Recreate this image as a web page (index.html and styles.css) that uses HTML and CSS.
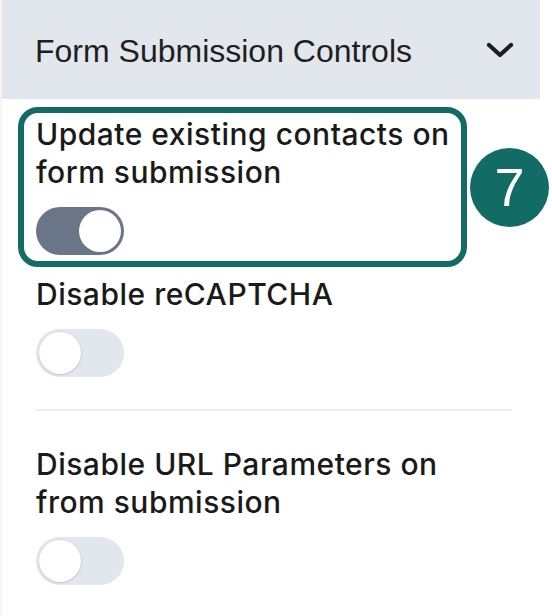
FILE: index.html
```html
<!DOCTYPE html>
<html>
<head>
<meta charset="utf-8">
<link rel="stylesheet" href="styles.css">
</head>
<body>
<div class="panel">
  <div class="panel-header">
    <span class="panel-title">Form Submission Controls</span>
    <svg class="chevron" width="28" height="16" viewBox="0 0 28 16"><polyline points="3,3 14,13 25,3" fill="none" stroke="#1f1f1f" stroke-width="4.2" stroke-linecap="round" stroke-linejoin="round"/></svg>
  </div>
  <div class="panel-body">
    <div class="setting setting-first">
      <div class="label">Update existing contacts on form submission</div>
      <div class="toggle on"><span class="knob"></span></div>
      <div class="highlight"></div>
      <div class="badge">7</div>
    </div>
    <div class="setting setting-second">
      <div class="label">Disable reCAPTCHA</div>
      <div class="toggle"><span class="knob"></span></div>
    </div>
    <div class="divider"></div>
    <div class="setting setting-third">
      <div class="label">Disable URL Parameters on<br>from submission</div>
      <div class="toggle"><span class="knob"></span></div>
    </div>
  </div>
</div>
</body>
</html>
```

FILE: styles.css
```css
html, body {
  margin: 0;
  padding: 0;
  background: #ffffff;
}

.panel {
  width: 538px;
  min-height: 616px;
  border-left: 2px solid #f3f5f8;
  box-sizing: content-box;
}

.panel-header {
  height: 99px;
  background: #e2e6ed;
  display: flex;
  align-items: center;
  justify-content: space-between;
  padding: 0 26px 0 33px;
}

.panel-title {
  font-family: "Liberation Sans", Arial, sans-serif;
  font-size: 32px;
  color: #1f1f1f;
  line-height: 1;
  padding-top: 2px;
}

.chevron {
  display: block;
}

.panel-body {
  padding: 0 28px 0 34px;
}

.setting {
  position: relative;
  display: flex;
  flex-direction: column;
  align-items: flex-start;
}

.setting-first {
  padding-top: 16px;
  max-width: 430px;
}

.setting-second {
  padding-top: 20px;
}

.setting-third {
  padding-top: 34px;
}

.label {
  font-family: Inter, "Noto Sans", sans-serif;
  font-size: 30px;
  font-weight: 500;
  line-height: 38px;
  color: #1a1a1a;
  letter-spacing: 0.5px;
}

.toggle {
  margin-top: 16px;
  width: 88px;
  height: 48px;
  border-radius: 24px;
  background: #e2e6ed;
  position: relative;
  display: flex;
  align-items: center;
  padding: 0 3px;
  box-sizing: border-box;
}

.toggle .knob {
  width: 42px;
  height: 42px;
  border-radius: 50%;
  background: #ffffff;
  box-shadow: 0 1px 2px rgba(0, 0, 0, 0.12), 0 0 0 1px rgba(0, 0, 0, 0.03);
}

.toggle.on {
  background: #6b7588;
  justify-content: flex-end;
}

.toggle.on .knob {
  box-shadow: none;
}

.divider {
  height: 2px;
  background: #eeeeee;
  margin-top: 32px;
}

.highlight {
  position: absolute;
  left: -18px;
  top: 8px;
  width: 449px;
  height: 160px;
  border: 6px solid #136b66;
  border-radius: 20px;
  box-sizing: border-box;
  pointer-events: none;
}

.badge {
  position: absolute;
  left: 434px;
  top: 49px;
  width: 79px;
  height: 79px;
  border-radius: 50%;
  background: #136b66;
  color: #ffffff;
  font-family: "Liberation Sans", Arial, sans-serif;
  font-size: 54px;
  line-height: 79px;
  text-align: center;
}
```
